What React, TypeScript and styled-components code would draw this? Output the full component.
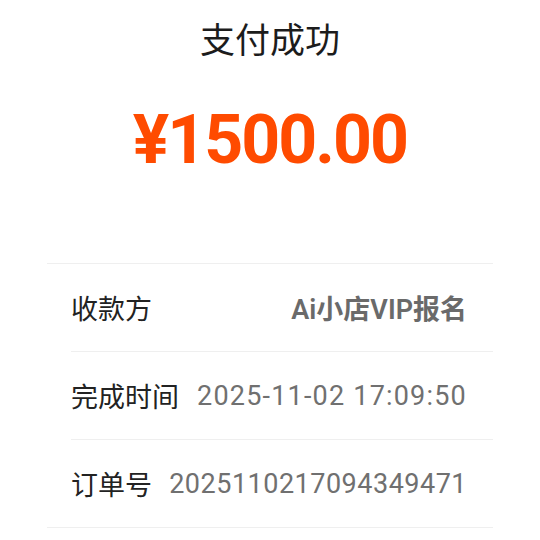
import * as React from 'react';
import styled, { createGlobalStyle } from 'styled-components';

const GlobalStyle = createGlobalStyle`
  html, body {
    margin: 0;
    padding: 0;
    background: #ffffff;
  }
  body {
    font-family: Roboto, "Noto Sans CJK SC", sans-serif;
    -webkit-font-smoothing: antialiased;
  }
`;

const Page = styled.div`
  width: 540px;
  height: 540px;
  box-sizing: border-box;
  display: flex;
  flex-direction: column;
  align-items: center;
  overflow: hidden;
`;

const Title = styled.h1`
  margin: 14px 0 0;
  font-family: "Noto Sans CJK SC", sans-serif;
  font-weight: 400;
  font-size: 35px;
  line-height: 48px;
  color: #1c1c1c;
`;

const Amount = styled.div`
  margin-top: 38px;
  font-family: Roboto, "Noto Sans CJK SC", sans-serif;
  font-weight: 700;
  font-size: 68px;
  line-height: 80px;
  letter-spacing: -2px;
  color: #ff4b00;
`;

const InfoList = styled.div`
  margin-top: 83px;
  width: 446px;
  border-top: 1px solid #efefef;
  border-bottom: 1px solid #efefef;
`;

const InfoRow = styled.div<{ $last?: boolean }>`
  margin-left: 24px;
  padding-right: 26px;
  height: 87px;
  display: flex;
  align-items: center;
  justify-content: space-between;
  gap: 16px;
  border-bottom: ${(p) => (p.$last ? 'none' : '1px solid #efefef')};
`;

const Label = styled.span`
  font-family: "Noto Sans CJK SC", sans-serif;
  font-size: 27px;
  color: #222222;
  white-space: nowrap;
`;

const Value = styled.span<{ $strong?: boolean; $spacing: number }>`
  font-family: Roboto, "Noto Sans CJK SC", sans-serif;
  font-size: 27px;
  font-weight: ${(p) => (p.$strong ? 600 : 400)};
  letter-spacing: ${(p) => p.$spacing}px;
  color: ${(p) => (p.$strong ? '#6a6a6a' : '#707070')};
  white-space: nowrap;
`;

const rows = [
  { label: '收款方', value: 'Ai小店VIP报名', strong: true, spacing: 0 },
  { label: '完成时间', value: '2025-11-02 17:09:50', spacing: 1.2 },
  { label: '订单号', value: '2025110217094349471', spacing: 0.5 },
];

export default function App() {
  return (
    <>
      <GlobalStyle />
      <Page>
        <Title>支付成功</Title>
        <Amount>¥1500.00</Amount>
        <InfoList>
          {rows.map((r, i) => (
            <InfoRow key={r.label} $last={i === rows.length - 1}>
              <Label>{r.label}</Label>
              <Value $strong={r.strong} $spacing={r.spacing}>
                {r.value}
              </Value>
            </InfoRow>
          ))}
        </InfoList>
      </Page>
    </>
  );
}
